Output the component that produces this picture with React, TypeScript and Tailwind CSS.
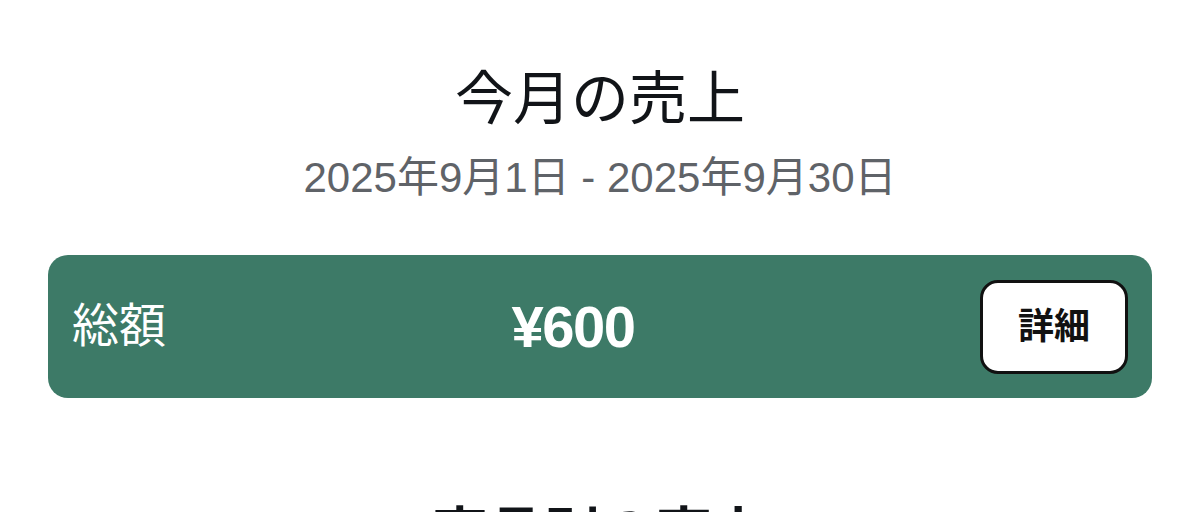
const font = { fontFamily: '"Liberation Sans", "Noto Sans CJK JP", sans-serif' };

export default function App() {
  return (
    <div className="min-h-[512px] bg-white overflow-hidden" style={font}>
      <div className="flex flex-col items-center pt-[62px]">
        <h1 className="text-[58px] leading-[74px] text-[#111418]">今月の売上</h1>
        <p className="mt-[16px] text-[42px] leading-[52px] text-[#5f6368]">2025年9月1日 - 2025年9月30日</p>
      </div>

      <div className="mx-12 mt-[51px] h-[143px] rounded-[20px] bg-[#3d7a67] flex items-center pl-6 pr-6">
        <span className="text-[47px] text-white">総額</span>
        <span className="flex-1 text-center text-[58px] font-bold text-white tracking-[-1.5px]">¥600</span>
        <button className="w-[148px] h-[94px] rounded-[18px] bg-white border-[3px] border-[#111] text-[36px] font-bold text-[#111]">
          詳細
        </button>
      </div>

      <h2 className="mt-[94px] text-center text-[56px] font-bold text-[#111418]">商品別の売上</h2>
    </div>
  );
}
